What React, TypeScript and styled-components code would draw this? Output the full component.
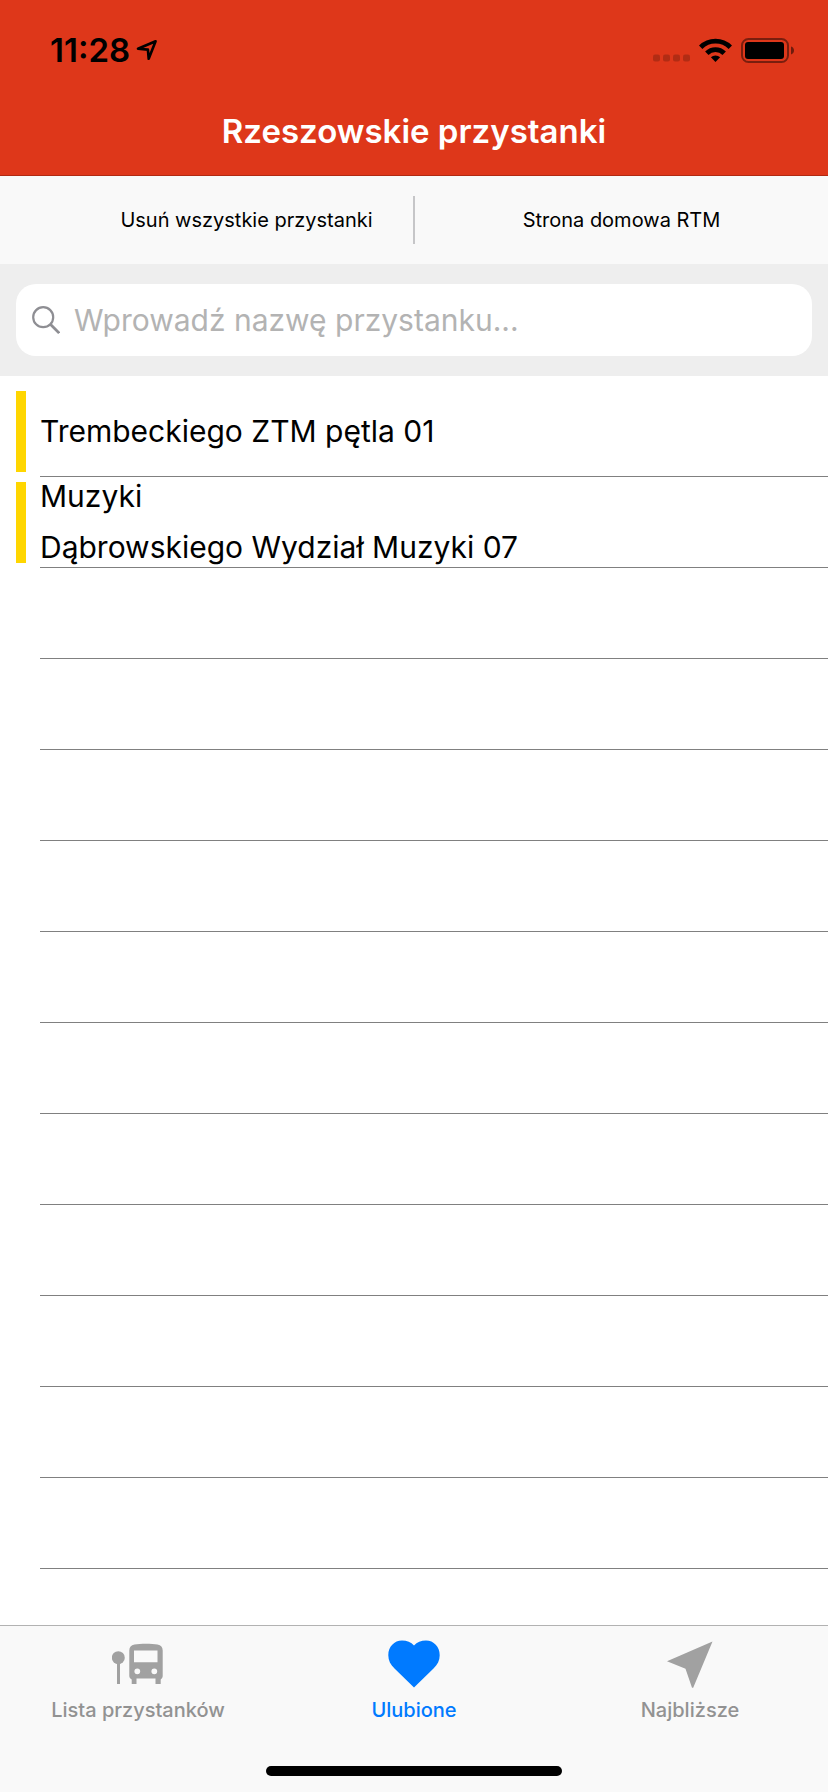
import React, { useState } from "react";
import styled, { createGlobalStyle } from "styled-components";

const GlobalStyle = createGlobalStyle`
  *, *::before, *::after { box-sizing: border-box; }
  html { height: 100%; }
  body {
    margin: 0;
    background: #fff;
    color: #000;
    font-family: Inter, "Liberation Sans", sans-serif;
  }
  button, input { font: inherit; color: inherit; }
`;

const Screen = styled.div`
  display: flex;
  flex-direction: column;
  min-height: 100vh;
`;

const Header = styled.header`
  background: #de371a;
  border-bottom: 1px solid #b02a12;
`;

const StatusBar = styled.div`
  display: flex;
  align-items: center;
  justify-content: space-between;
  height: 88px;
  padding: 12px 34px 0 50px;
`;

const StatusGroup = styled.div<{ $gap: number }>`
  display: flex;
  align-items: center;
  gap: ${(p) => p.$gap}px;
`;

const Clock = styled.time`
  font-size: 33px;
  font-weight: 600;
  line-height: 40px;
`;

const Title = styled.h1`
  margin: 0;
  color: #fff;
  font-size: 33px;
  font-weight: 600;
  line-height: 87px;
  text-align: center;
`;

const Toolbar = styled.div`
  display: grid;
  grid-template-columns: minmax(0, 1fr) 2px minmax(0, 1fr);
  align-items: center;
  height: 88px;
  background: #f9f9f9;
`;

const ToolbarCell = styled.div<{ $inset?: boolean }>`
  display: flex;
  padding-left: ${(p) => (p.$inset ? 80 : 0)}px;
`;

const ToolbarButton = styled.button`
  flex: 1;
  height: 88px;
  padding: 0;
  border: 0;
  background: none;
  font-size: 20px;
  white-space: nowrap;
`;

const Divider = styled.span`
  height: 48px;
  background: #c6c6c8;
`;

const SearchArea = styled.form`
  padding: 20px 16px;
  background: #eee;
`;

const SearchBox = styled.label`
  display: flex;
  align-items: center;
  gap: 14px;
  height: 72px;
  padding: 0 16px;
  border-radius: 20px;
  background: #fff;
`;

const SearchInput = styled.input`
  flex: 1;
  min-width: 0;
  height: 72px;
  padding: 0;
  border: 0;
  outline: 0;
  background: none;
  font-size: 30px;
  &::placeholder { color: #b3b3b3; opacity: 1; }
`;

const StopList = styled.ul`
  flex: 1;
  margin: 0;
  padding: 10px 0 0;
  list-style: none;
`;

const StopRow = styled.li`
  display: flex;
  height: 91px;
  padding-left: 16px;
`;

const Marker = styled.span<{ $color: string }>`
  width: 10px;
  margin: 5px 14px 5px 0;
  background: ${(p) => p.$color};
`;

const StopButton = styled.button`
  flex: 1;
  display: flex;
  align-items: center;
  min-width: 0;
  padding: 0;
  border: 0;
  border-bottom: 1px solid #808080;
  background: none;
  text-align: left;
`;

const StopName = styled.span`
  font-size: 30px;
  line-height: 51px;
  white-space: pre-line;
`;

const BlankLine = styled.span`
  flex: 1;
  border-bottom: 1px solid #808080;
`;

const TabBar = styled.nav`
  background: #f9f9f9;
  border-top: 1px solid #b2b2b2;
  padding-bottom: 16px;
`;

const Tabs = styled.div`
  display: flex;
  height: 140px;
`;

const Tab = styled.button<{ $active: boolean }>`
  flex: 1 1 0;
  display: flex;
  flex-direction: column;
  align-items: center;
  gap: 8px;
  padding: 12px 0 0;
  border: 0;
  background: none;
  color: ${(p) => (p.$active ? "#007aff" : "#929292")};
  font-size: 20px;
  font-weight: 500;
  line-height: 24px;
`;

const HomeIndicator = styled.div`
  width: 296px;
  height: 10px;
  margin: 0 auto;
  border-radius: 5px;
  background: #000;
`;

const LocationIcon = () => (
  <svg width="22" height="22" viewBox="0 0 22 22" aria-hidden="true">
    <path d="M19.6 2.2 2 9.8l9.9.8.8 9.2z" fill="none" stroke="#000" strokeWidth="2.6" strokeLinejoin="round" />
  </svg>
);

const SignalIcon = () => (
  <svg width="37" height="24" viewBox="0 0 37 24" fill="#000" fillOpacity=".2" aria-hidden="true">
    {[0, 10, 20, 30].map((x) => (
      <rect key={x} x={x} y="16.500" width="7" height="7" rx="2" />
    ))}
  </svg>
);

const WifiIcon = () => (
  <svg width="33" height="24" viewBox="0 0 33 24" aria-hidden="true">
    <g fill="none" stroke="#000" strokeWidth="4.800">
      <path d="M1.700 9.200a21 21 0 0 1 29.600 0" />
      <path d="M7.800 15.300a12.300 12.300 0 0 1 17.400 0" />
    </g>
    <path d="M16.500 24 11.900 19.300a6.500 6.500 0 0 1 9.200 0z" fill="#000" />
  </svg>
);

const BatteryIcon = () => (
  <svg width="53" height="25" viewBox="0 0 53 25" aria-hidden="true">
    <rect x="1" y="1" width="46" height="23" rx="6.500" fill="none" stroke="#000" strokeOpacity=".45" strokeWidth="2" />
    <rect x="4" y="4" width="39" height="17" rx="3" fill="#000" />
    <path d="M50 8.500c2 .6 3 2.200 3 4s-1 3.400-3 4z" fill="#000" fillOpacity=".5" />
  </svg>
);

const SearchIcon = () => (
  <svg width="28" height="28" viewBox="0 0 28 28" fill="none" stroke="#8e8e93" strokeWidth="2.200" aria-hidden="true">
    <circle cx="11.200" cy="11.200" r="10" />
    <path d="m18.600 18.400 8.600 8.700" strokeWidth="2.800" />
  </svg>
);

const BusStopIcon = () => (
  <svg width="52" height="52" viewBox="0 0 52 52" fill="#a1a1a1" aria-hidden="true">
    <circle cx="6.300" cy="19.700" r="6.500" />
    <path d="M5 20h3v26H5z" />
    <path
      fillRule="evenodd"
      d="M22.500 6.600C28 5.300 40 5.300 45.500 6.600c3.500.8 5.200 2.800 5.200 6V38c0 1.600-.8 2.700-2 3.400V46H43.500v-5.500h-19V46h-4.800v-4.600c-1.500-.7-2.400-1.800-2.400-3.400V12.600c0-3.200 1.700-5.200 5.200-6zM22 12.500v11.700h23.500V12.500zM22.400 33.300a2.900 2.900 0 1 0 5.800 0 2.900 2.900 0 1 0-5.800 0zM39.400 33.300a2.900 2.900 0 1 0 5.800 0 2.900 2.900 0 1 0-5.800 0z"
    />
  </svg>
);

const HeartIcon = () => (
  <svg width="52" height="52" viewBox="0 0 52 52" fill="currentColor" aria-hidden="true">
    <path d="M26 49.500 6.500 30.500C2.500 26.500.3 22.500.3 17.200.3 8.800 6.300 2.600 14 2.600c5 0 9 1.700 12 5 3-3.300 7-5 12-5 7.700 0 13.700 6.200 13.700 14.600 0 5.300-2.200 9.300-6.200 13.300z" />
  </svg>
);

const ArrowIcon = () => (
  <svg width="52" height="52" viewBox="0 0 52 52" fill="#a1a1a1" aria-hidden="true">
    <path d="M48.500 3.500 3 23.200l18.500 7.600L28 49.700h1.200z" />
  </svg>
);

const stops = ["Trembeckiego ZTM pętla 01", "Muzyki\nDąbrowskiego Wydział Muzyki 07"];
const blankRows = Array.from({ length: 11 }, (_, i) => i);

const tabs = [
  { label: "Lista przystanków", Icon: BusStopIcon },
  { label: "Ulubione", Icon: HeartIcon },
  { label: "Najbliższe", Icon: ArrowIcon },
];

export default function App() {
  const [query, setQuery] = useState("");
  const [active, setActive] = useState(1);

  return (
    <Screen>
      <GlobalStyle />
      <Header>
        <StatusBar>
          <StatusGroup $gap={6}>
            <Clock>11:28</Clock>
            <LocationIcon />
          </StatusGroup>
          <StatusGroup $gap={9}>
            <SignalIcon />
            <WifiIcon />
            <BatteryIcon />
          </StatusGroup>
        </StatusBar>
        <Title>Rzeszowskie przystanki</Title>
      </Header>
      <Toolbar>
        <ToolbarCell $inset>
          <ToolbarButton type="button">Usuń wszystkie przystanki</ToolbarButton>
        </ToolbarCell>
        <Divider />
        <ToolbarCell>
          <ToolbarButton type="button">Strona domowa RTM</ToolbarButton>
        </ToolbarCell>
      </Toolbar>
      <SearchArea role="search" onSubmit={(e) => e.preventDefault()}>
        <SearchBox>
          <SearchIcon />
          <SearchInput
            type="text"
            aria-label="Wprowadź nazwę przystanku"
            placeholder="Wprowadź nazwę przystanku..."
            value={query}
            onChange={(e) => setQuery(e.target.value)}
          />
        </SearchBox>
      </SearchArea>
      <StopList>
        {stops.map((name) => (
          <StopRow key={name}>
            <Marker $color="#ffd600" />
            <StopButton type="button">
              <StopName>{name}</StopName>
            </StopButton>
          </StopRow>
        ))}
        {blankRows.map((i) => (
          <StopRow key={i} aria-hidden="true">
            <Marker $color="transparent" />
            <BlankLine />
          </StopRow>
        ))}
      </StopList>
      <TabBar>
        <Tabs>
          {tabs.map(({ label, Icon }, i) => (
            <Tab
              key={label}
              type="button"
              $active={i === active}
              aria-current={i === active ? "page" : undefined}
              onClick={() => setActive(i)}
            >
              <Icon />
              {label}
            </Tab>
          ))}
        </Tabs>
        <HomeIndicator />
      </TabBar>
    </Screen>
  );
}
